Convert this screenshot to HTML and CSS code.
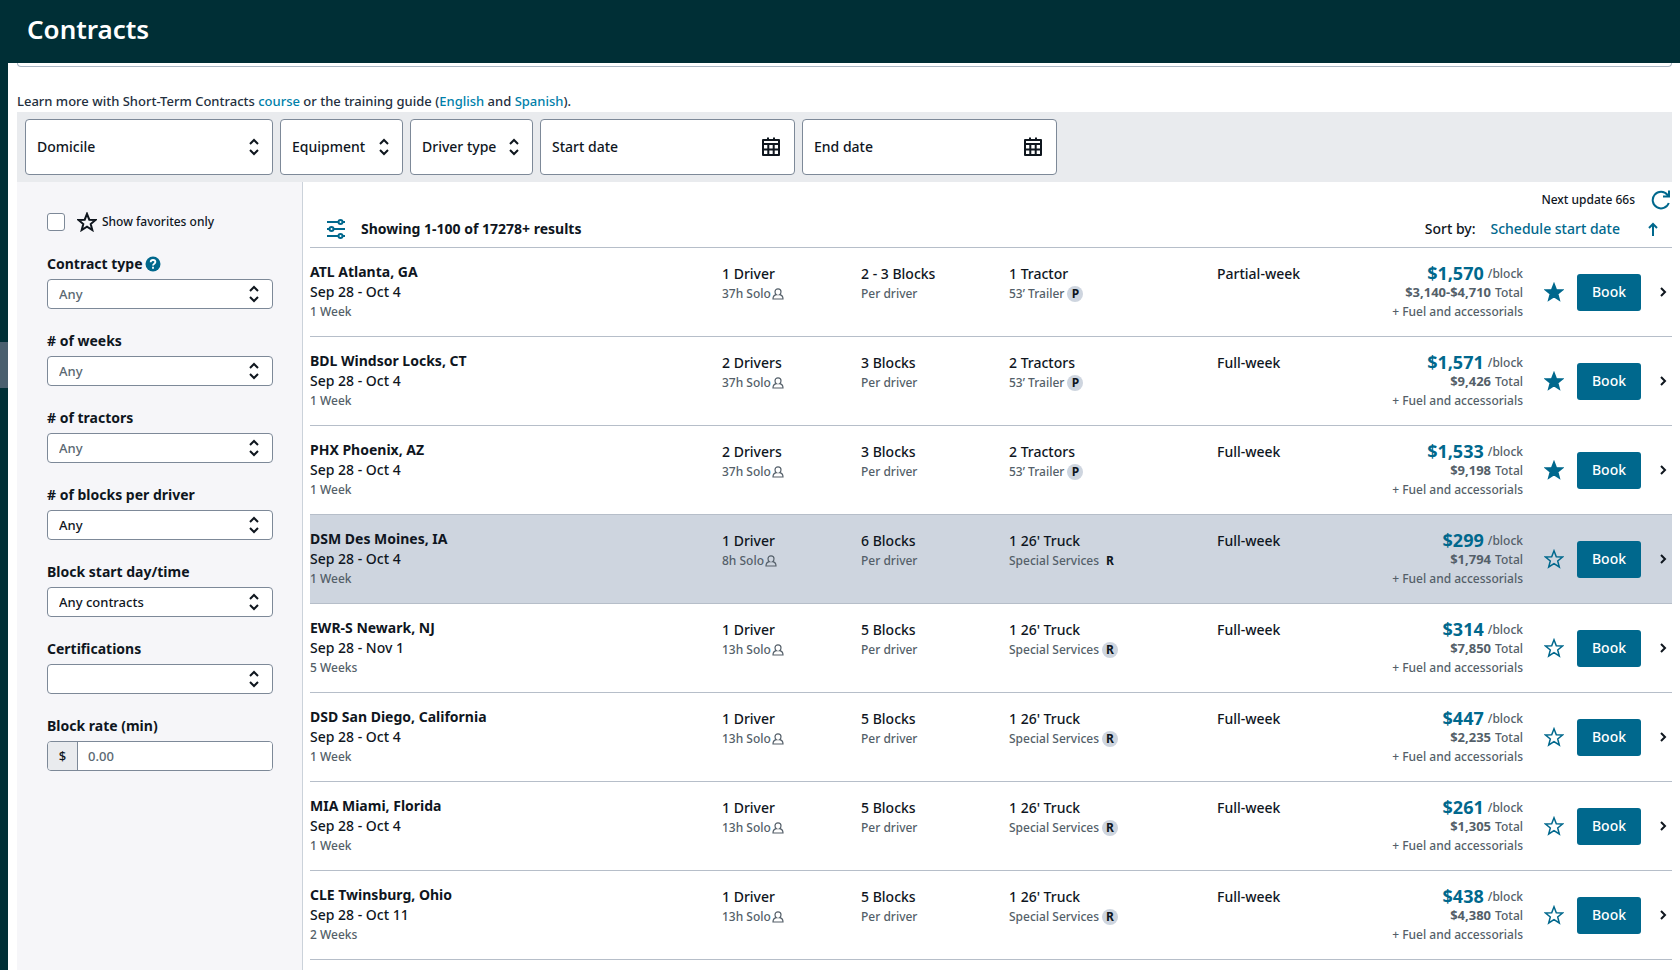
FILE: index.html
```html
<!DOCTYPE html>
<html lang="en">
<head>
    <meta charset="UTF-8">
    <meta name="viewport" content="width=device-width, initial-scale=1.0">
    <title>Contracts</title>
    <link rel="stylesheet" href="styles.css">
</head>
<body>
    <!-- shared icons -->
    <svg class="sprite" aria-hidden="true">
        <symbol id="updown" viewBox="0 0 12 18">
            <path d="M2 6l4-4 4 4M2 12l4 4 4-4" fill="none" stroke="currentColor" stroke-width="2"/>
        </symbol>
        <symbol id="calendar" viewBox="0 0 20 20">
            <path d="M2 3h16v15H2zM2 7h16M2 12.500h16M7.300 7v11M12.700 7v11M7 0.500v3M13 0.500v3" fill="none" stroke="currentColor" stroke-width="2" stroke-linejoin="round"/>
        </symbol>
        <symbol id="star" viewBox="0 0 20 20">
            <path d="M10 1.800l2.300 5.900 6.200.3-4.800 4 1.600 6L10 14.600 4.700 18l1.600-6-4.800-4 6.200-.3z" stroke="currentColor"/>
        </symbol>
        <symbol id="person" viewBox="0 0 12 12">
            <path d="M1 11c0-2.600 1.400-4 3.400-4.300C3.300 6 3 4.800 3 3.700 3 2 4.300.8 6 .8s3 1.200 3 2.900c0 1.100-.3 2.300-1.400 3C9.600 7 11 8.400 11 11z" fill="none" stroke="currentColor" stroke-width="1.200"/>
        </symbol>
        <symbol id="chevron" viewBox="0 0 8 12">
            <path d="M2 2l4 4-4 4" fill="none" stroke="currentColor" stroke-width="2"/>
        </symbol>
    </svg>

    <header class="header">
        <h1>Contracts</h1>
    </header>

    <div class="page">
        <div class="rail"><div class="rail-handle"></div></div>
        <main class="content">
            <div class="banner"></div>
            <p class="intro">Learn more with Short-Term Contracts <a href="#">course</a> or the training guide (<a href="#">English</a> and <a href="#">Spanish</a>).</p>

            <div class="filter-bar">
                <div class="select big domicile">
                    <select aria-label="Domicile"><option>Domicile</option></select>
                    <svg class="updown"><use href="#updown"/></svg>
                </div>
                <div class="select big">
                    <select aria-label="Equipment"><option>Equipment</option></select>
                    <svg class="updown"><use href="#updown"/></svg>
                </div>
                <div class="select big">
                    <select aria-label="Driver type"><option>Driver type</option></select>
                    <svg class="updown"><use href="#updown"/></svg>
                </div>
                <div class="date">
                    <input type="text" placeholder="Start date" aria-label="Start date">
                    <button aria-label="Pick start date"><svg class="calendar"><use href="#calendar"/></svg></button>
                </div>
                <div class="date">
                    <input type="text" placeholder="End date" aria-label="End date">
                    <button aria-label="Pick end date"><svg class="calendar"><use href="#calendar"/></svg></button>
                </div>
            </div>

            <div class="columns">
                <aside class="sidebar">
                    <label class="favorites">
                        <input type="checkbox">
                        <svg class="star"><use href="#star"/></svg>
                        Show favorites only
                    </label>

                    <div class="field">
                        <div class="field-label">
                            <label for="type">Contract type</label>
                            <svg class="help" viewBox="0 0 16 16">
                                <circle cx="8" cy="8" r="7.500" fill="#00688d"/>
                                <path d="M5.700 6.300C5.700 4.800 6.600 4 8 4s2.400.8 2.400 2.100C10.400 7.700 8 7.700 8 9.500M8 10.700v2" fill="none" stroke="#fff" stroke-width="1.800"/>
                            </svg>
                        </div>
                        <div class="select muted">
                            <select id="type"><option>Any</option></select>
                            <svg class="updown"><use href="#updown"/></svg>
                        </div>
                    </div>
                    <div class="field">
                        <div class="field-label"><label for="weeks"># of weeks</label></div>
                        <div class="select muted">
                            <select id="weeks"><option>Any</option></select>
                            <svg class="updown"><use href="#updown"/></svg>
                        </div>
                    </div>
                    <div class="field">
                        <div class="field-label"><label for="tractors"># of tractors</label></div>
                        <div class="select muted">
                            <select id="tractors"><option>Any</option></select>
                            <svg class="updown"><use href="#updown"/></svg>
                        </div>
                    </div>
                    <div class="field">
                        <div class="field-label"><label for="blocks"># of blocks per driver</label></div>
                        <div class="select">
                            <select id="blocks"><option>Any</option></select>
                            <svg class="updown"><use href="#updown"/></svg>
                        </div>
                    </div>
                    <div class="field">
                        <div class="field-label"><label for="start">Block start day/time</label></div>
                        <div class="select">
                            <select id="start"><option>Any contracts</option></select>
                            <svg class="updown"><use href="#updown"/></svg>
                        </div>
                    </div>
                    <div class="field">
                        <div class="field-label"><label for="certs">Certifications</label></div>
                        <div class="select">
                            <select id="certs"><option></option></select>
                            <svg class="updown"><use href="#updown"/></svg>
                        </div>
                    </div>
                    <div class="field">
                        <div class="field-label"><label for="rate">Block rate (min)</label></div>
                        <div class="money">
                            <span>$</span>
                            <input type="text" id="rate" placeholder="0.00">
                        </div>
                    </div>
                </aside>

                <section class="results">
                    <div class="update">
                        Next update 66s
                        <button aria-label="Refresh">
                            <svg class="refresh" viewBox="0 0 20 20" fill="none" stroke="currentColor" stroke-width="2">
                                <path d="M17.800 13A8.300 8.300 0 1 1 16.500 4.900L18 6.500M18 .500v6h-6"/>
                            </svg>
                        </button>
                    </div>
                    <div class="results-head">
                        <svg class="sliders" viewBox="0 0 18 20" fill="none" stroke="currentColor" stroke-width="2">
                            <path d="M0 3h11M16 3h2M0 10h2M7 10h11M0 17h11M16 17h2"/>
                            <circle cx="13.500" cy="3" r="2"/>
                            <circle cx="4.500" cy="10" r="2"/>
                            <circle cx="13.500" cy="17" r="2"/>
                        </svg>
                        <h2>Showing 1-100 of 17278+ results</h2>
                        <span class="sort-label">Sort by:</span>
                        <a class="sort-link" href="#">Schedule start date</a>
                        <button aria-label="Sort ascending">
                            <svg class="arrow" viewBox="0 0 10 14" fill="none" stroke="currentColor" stroke-width="2">
                                <path d="M5 14V2M1 6l4-4 4 4"/>
                            </svg>
                        </button>
                    </div>
                    <table class="contracts">
                        <colgroup>
                            <col>
                            <col class="col-drivers">
                            <col class="col-blocks">
                            <col class="col-truck">
                            <col class="col-week">
                            <col class="col-price">
                            <col class="col-star">
                            <col class="col-book">
                            <col class="col-more">
                        </colgroup>
                        <tbody id="rows"></tbody>
                    </table>
                </section>
            </div>
        </main>
    </div>

    <script src="script.js"></script>
</body>
</html>
```
FILE: styles.css
```css
* {
    box-sizing: border-box;
}
body {
    margin: 0;
    min-height: 100vh;
    display: flex;
    flex-direction: column;
    font-family: "Noto Sans", "Open Sans", sans-serif;
    font-size: 14px;
    line-height: 20px;
    font-weight: 500;
    color: #0f161e;
    background-color: #fff;
}
a {
    color: #00688d;
    text-decoration: none;
}
input, select, button {
    font: inherit;
    color: inherit;
}
button {
    border: none;
    background: none;
    padding: 0;
    cursor: pointer;
}
svg {
    display: block;
    flex: none;
}
.sprite {
    position: absolute;
    width: 0;
    height: 0;
}

.header {
    height: 63px;
    padding: 10px 27px;
    background-color: #002f36;
    color: #fff;
}
.header h1 {
    margin: 0;
    font-size: 26px;
    line-height: 38px;
    font-weight: 600;
}
.page {
    flex: 1;
    display: flex;
}
.rail {
    width: 8px;
    flex: none;
    padding-top: 279px;
    background-color: #002f36;
}
.rail-handle {
    height: 46px;
    background-color: #4a5f6e;
}
.content {
    flex: 1;
    min-width: 0;
    display: flex;
    flex-direction: column;
    padding: 0 8px 0 9px;
}
.banner {
    height: 4px;
    border: 1px solid #aab7c4;
    border-top: none;
    border-radius: 0 0 4px 4px;
}
.intro {
    margin: 24px 0 1px;
    font-size: 13px;
    color: #232f3e;
}
.intro a {
    color: #007faa;
}

/* top filters */
.filter-bar {
    display: flex;
    gap: 7px;
    padding: 7px 8px;
    background-color: #e9ebee;
}
.select {
    position: relative;
}
.select select {
    display: block;
    width: 100%;
    height: 30px;
    padding: 0 34px 0 11px;
    border: 1px solid #7d8998;
    border-radius: 4px;
    background-color: #fff;
    appearance: none;
    font-size: 13px;
}
.select.muted select {
    color: #5a6872;
}
.select .updown {
    position: absolute;
    right: 13px;
    top: 50%;
    margin-top: -9px;
    width: 12px;
    height: 18px;
    pointer-events: none;
}
.select.big {
    width: 123px;
}
.select.big.domicile {
    width: 248px;
}
.select.big select {
    height: 56px;
    padding-right: 28px;
    font-size: 14px;
}
.date {
    display: flex;
    align-items: center;
    width: 255px;
    height: 56px;
    padding: 0 13px 0 11px;
    border: 1px solid #7d8998;
    border-radius: 4px;
    background-color: #fff;
}
.date input {
    flex: 1;
    min-width: 0;
    padding: 0;
    border: none;
    outline: none;
}
.date input::placeholder {
    color: #0f161e;
}
.calendar {
    width: 20px;
    height: 20px;
}

.columns {
    flex: 1;
    display: flex;
}

/* sidebar */
.sidebar {
    width: 286px;
    flex: none;
    padding: 30px 29px 0 30px;
    border-right: 1px solid #cbd2da;
    background-color: #f6f6f9;
}
.favorites {
    display: flex;
    align-items: center;
    font-size: 12px;
}
.favorites input {
    width: 18px;
    height: 18px;
    margin: 0 12px 0 0;
    border: 1px solid #7d8998;
    border-radius: 3px;
    background-color: #fff;
    appearance: none;
}
.favorites .star {
    width: 20px;
    height: 20px;
    margin-right: 5px;
    fill: none;
    stroke-width: 2;
}
.field {
    margin-top: 22px;
}
.field-label {
    display: flex;
    align-items: center;
    gap: 2px;
    margin-bottom: 5px;
    font-weight: 700;
}
.help {
    width: 16px;
    height: 16px;
}
.money {
    display: flex;
    height: 30px;
    border: 1px solid #7d8998;
    border-radius: 4px;
    overflow: hidden;
    font-size: 13px;
}
.money span {
    width: 30px;
    line-height: 28px;
    text-align: center;
    border-right: 1px solid #7d8998;
    background-color: #e9ebee;
}
.money input {
    flex: 1;
    min-width: 0;
    padding: 0 10px;
    border: none;
    outline: none;
}
.money input::placeholder {
    color: #5a6872;
}

/* results */
.results {
    flex: 1;
    min-width: 0;
    padding-left: 7px;
}
.update {
    display: flex;
    justify-content: flex-end;
    align-items: center;
    gap: 16px;
    padding: 8px 1px 0 0;
    font-size: 12px;
}
.update button, .results-head button {
    color: #00688d;
}
.refresh {
    width: 20px;
    height: 20px;
}
.results-head {
    display: flex;
    align-items: center;
    padding: 9px 14px 8px 17px;
    border-bottom: 1px solid #b6bec9;
}
.sliders {
    width: 18px;
    height: 20px;
    margin-right: 16px;
    color: #00688d;
}
.results-head h2 {
    flex: 1;
    margin: 0;
    font-size: 14px;
}
.sort-link {
    margin: 0 28px 0 15px;
}
.arrow {
    width: 10px;
    height: 14px;
}
.contracts {
    width: 100%;
    table-layout: fixed;
    border-collapse: separate;
    border-spacing: 0;
}
.col-drivers {
    width: 139px;
}
.col-blocks {
    width: 148px;
}
.col-truck {
    width: 208px;
}
.col-week {
    width: 120px;
}
.col-price {
    width: 186px;
}
.col-star {
    width: 54px;
}
.col-book {
    width: 64px;
}
.col-more {
    width: 31px;
}
.contracts td {
    height: 89px;
    padding: 14px 0 0;
    border-bottom: 1px solid #b6bec9;
    vertical-align: top;
    white-space: nowrap;
}
.contracts td.info, .contracts td.price {
    padding-top: 16px;
}
.contracts tr.selected {
    background-color: #ced5df;
}
.contracts strong {
    display: block;
}
.small {
    display: flex;
    align-items: center;
    font-size: 12px;
    color: #545f69;
}
.price .small {
    justify-content: flex-end;
    gap: 4px;
    line-height: 19px;
}
.price b {
    font-size: 13px;
    font-weight: 700;
}
.person {
    width: 12px;
    height: 12px;
    margin-left: 1px;
}
.badge {
    width: 16px;
    height: 16px;
    margin-left: 3px;
    border-radius: 50%;
    background-color: #ced5df;
    color: #0f161e;
    font-weight: 700;
    line-height: 16px;
    text-align: center;
}
.rate {
    font-size: 18px;
    font-weight: 700;
    color: #00688d;
}
.contracts td.action {
    padding: 0;
    vertical-align: middle;
}
.contracts td.favorite {
    padding-left: 8px;
}
.action button {
    display: block;
    margin: 0 auto;
}
.action .star {
    width: 20px;
    height: 20px;
    color: #00688d;
    fill: none;
    stroke-width: 1.5;
}
.action .on .star {
    fill: currentColor;
}
.action button.book {
    width: 64px;
    height: 37px;
    border-radius: 3px;
    background-color: #00688d;
    color: #fff;
}
.action .chevron {
    width: 8px;
    height: 12px;
    margin-left: 12px;
}
```
FILE: script.js
```js
const contracts = [
    { place: "ATL Atlanta, GA", dates: "Sep 28 - Oct 4", weeks: "1 Week", drivers: "1 Driver", solo: "37h Solo", blocks: "2 - 3 Blocks", truck: "1 Tractor", kind: "53’ Trailer", badge: "P", span: "Partial-week", rate: "$1,570", total: "$3,140-$4,710", fav: true },
    { place: "BDL Windsor Locks, CT", dates: "Sep 28 - Oct 4", weeks: "1 Week", drivers: "2 Drivers", solo: "37h Solo", blocks: "3 Blocks", truck: "2 Tractors", kind: "53’ Trailer", badge: "P", span: "Full-week", rate: "$1,571", total: "$9,426", fav: true },
    { place: "PHX Phoenix, AZ", dates: "Sep 28 - Oct 4", weeks: "1 Week", drivers: "2 Drivers", solo: "37h Solo", blocks: "3 Blocks", truck: "2 Tractors", kind: "53’ Trailer", badge: "P", span: "Full-week", rate: "$1,533", total: "$9,198", fav: true },
    { place: "DSM Des Moines, IA", dates: "Sep 28 - Oct 4", weeks: "1 Week", drivers: "1 Driver", solo: "8h Solo", blocks: "6 Blocks", truck: "1 26' Truck", kind: "Special Services", badge: "R", span: "Full-week", rate: "$299", total: "$1,794", selected: true },
    { place: "EWR-S Newark, NJ", dates: "Sep 28 - Nov 1", weeks: "5 Weeks", drivers: "1 Driver", solo: "13h Solo", blocks: "5 Blocks", truck: "1 26' Truck", kind: "Special Services", badge: "R", span: "Full-week", rate: "$314", total: "$7,850" },
    { place: "DSD San Diego, California", dates: "Sep 28 - Oct 4", weeks: "1 Week", drivers: "1 Driver", solo: "13h Solo", blocks: "5 Blocks", truck: "1 26' Truck", kind: "Special Services", badge: "R", span: "Full-week", rate: "$447", total: "$2,235" },
    { place: "MIA Miami, Florida", dates: "Sep 28 - Oct 4", weeks: "1 Week", drivers: "1 Driver", solo: "13h Solo", blocks: "5 Blocks", truck: "1 26' Truck", kind: "Special Services", badge: "R", span: "Full-week", rate: "$261", total: "$1,305" },
    { place: "CLE Twinsburg, Ohio", dates: "Sep 28 - Oct 11", weeks: "2 Weeks", drivers: "1 Driver", solo: "13h Solo", blocks: "5 Blocks", truck: "1 26' Truck", kind: "Special Services", badge: "R", span: "Full-week", rate: "$438", total: "$4,380" }
];

document.getElementById("rows").innerHTML = contracts.map(c => `
    <tr class="${c.selected ? "selected" : ""}">
        <td><strong>${c.place}</strong><div>${c.dates}</div><div class="small">${c.weeks}</div></td>
        <td class="info">${c.drivers}<div class="small">${c.solo}<svg class="person"><use href="#person"/></svg></div></td>
        <td class="info">${c.blocks}<div class="small">Per driver</div></td>
        <td class="info">${c.truck}<div class="small">${c.kind}<span class="badge">${c.badge}</span></div></td>
        <td class="info">${c.span}</td>
        <td class="price">
            <div class="small"><span class="rate">${c.rate}</span>/block</div>
            <div class="small"><b>${c.total}</b> Total</div>
            <div class="small">+ Fuel and accessorials</div>
        </td>
        <td class="action favorite"><button class="${c.fav ? "on" : ""}" aria-label="Favorite"><svg class="star"><use href="#star"/></svg></button></td>
        <td class="action"><button class="book">Book</button></td>
        <td class="action"><button aria-label="Details"><svg class="chevron"><use href="#chevron"/></svg></button></td>
    </tr>`).join("");
```
